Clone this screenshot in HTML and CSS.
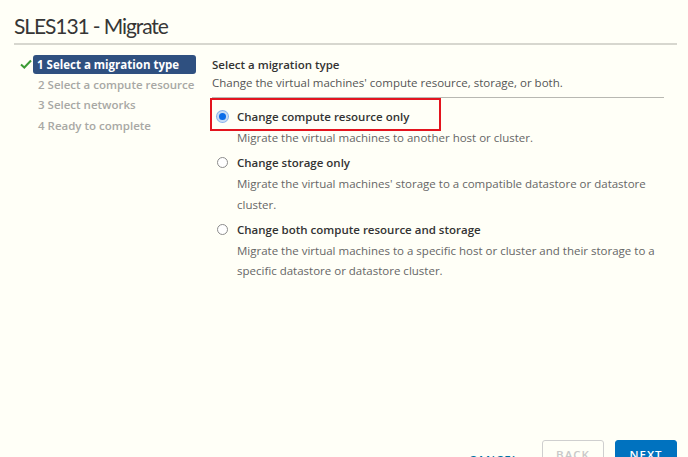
FILE: index.html
```html
<!DOCTYPE html>
<html>
<head>
<meta charset="utf-8">
<link rel="stylesheet" href="styles.css">
</head>
<body>
<div class="dialog">
  <h1 class="title">SLES131 - Migrate</h1>
  <div class="body">
    <nav class="steps">
      <div class="step current">
        <svg class="check" viewBox="0 0 12 10" width="12" height="10"><path d="M1 5.5 L4.3 8.5 L11 1.5" fill="none" stroke="#3c9c35" stroke-width="2"/></svg>
        <span class="pill">1 Select a migration type</span>
      </div>
      <div class="step">2 Select a compute resource</div>
      <div class="step">3 Select networks</div>
      <div class="step">4 Ready to complete</div>
    </nav>
    <main class="content">
      <div class="head">
        <div class="h-title">Select a migration type</div>
        <div class="h-sub">Change the virtual machines' compute resource, storage, or both.</div>
      </div>
      <div class="options">
        <div class="option highlighted">
          <label class="opt-label"><span class="radio checked"></span>Change compute resource only</label>
        </div>
        <div class="desc">Migrate the virtual machines to another host or cluster.</div>
        <div class="option">
          <label class="opt-label"><span class="radio"></span>Change storage only</label>
        </div>
        <div class="desc">Migrate the virtual machines' storage to a compatible datastore or datastore cluster.</div>
        <div class="option">
          <label class="opt-label"><span class="radio"></span>Change both compute resource and storage</label>
        </div>
        <div class="desc">Migrate the virtual machines to a specific host or cluster and their storage to a specific datastore or datastore cluster.</div>
      </div>
    </main>
  </div>
  <footer class="footer">
    <button class="btn link">CANCEL</button>
    <button class="btn outline">BACK</button>
    <button class="btn primary">NEXT</button>
  </footer>
</div>
</body>
</html>
```
FILE: styles.css
```css
html, body {
  margin: 0;
  padding: 0;
  background: #fffff7;
  height: 457px;
  overflow: hidden;
}
body {
  font-family: "Open Sans", "Lato", sans-serif;
  color: #565656;
}
.dialog {
  padding: 0 11px 0 14px;
  height: 457px;
  display: flex;
  flex-direction: column;
}
.title {
  margin: 0;
  padding-top: 13px;
  height: 30px;
  font-family: "Lato", sans-serif;
  font-weight: 400;
  font-size: 21px;
  line-height: 26px;
  color: #363636;
  letter-spacing: -1.1px;
  border-bottom: 2px solid #d7d7cf;
}
.body {
  display: flex;
  flex: 1;
  padding-top: 9px;
}
.steps {
  width: 182px;
  padding-left: 4px;
  display: flex;
  flex-direction: column;
}
.step {
  font-size: 11.5px;
  font-weight: 600;
  color: #a8a8a4;
  height: 20.5px;
  line-height: 20px;
  padding-left: 20px;
}
.step.current {
  padding-left: 2px;
  display: flex;
  align-items: center;
  gap: 3px;
}
.check { flex: none; }
.pill {
  background: #2f5080;
  color: #fff;
  font-weight: 700;
  border-radius: 3px;
  height: 19px;
  line-height: 19px;
  padding: 0 4px;
  width: 155px;
  margin-left: -2px;
}
.content {
  flex: 1;
  padding-left: 12px;
  padding-right: 13px;
}
.head {
  border-bottom: 1px solid #b8b8b2;
  padding-top: 2px;
  padding-bottom: 5px;
}
.h-title {
  font-size: 11.5px;
  font-weight: 600;
  color: #333;
  line-height: 18px;
}
.h-sub {
  font-size: 11.5px;
  line-height: 18px;
  color: #555;
}
.options { padding-top: 7px; }
.option {
  position: relative;
  display: flex;
  align-items: center;
  height: 23px;
  padding-left: 5px;
}
.option.highlighted::after {
  content: "";
  position: absolute;
  left: -2px;
  top: -7px;
  bottom: -3px;
  width: 231px;
  border: 2px solid #e3141e;
  box-sizing: border-box;
  pointer-events: none;
}
.opt-label {
  display: flex;
  align-items: center;
  font-size: 11.5px;
  font-weight: 600;
  color: #333;
  white-space: nowrap;
}
.radio {
  width: 11px;
  height: 11px;
  border-radius: 50%;
  border: 1px solid #8c8c8c;
  background: #fff;
  margin-right: 9px;
  box-sizing: border-box;
}
.radio.checked {
  border: 2px solid #c8dcf5;
  background: #0a6be8;
  box-shadow: 0 0 0 1px #8ab2ea;
}
.desc {
  font-size: 11.5px;
  line-height: 20.5px;
  color: #666;
  padding-left: 25px;
  padding-right: 6px;
  margin-bottom: 2.5px;
}
.footer {
  display: flex;
  justify-content: flex-end;
  align-items: flex-start;
  gap: 11px;
  height: 17px;
  padding-right: 0;
}
.btn {
  font-family: "Open Sans", sans-serif;
  font-size: 11.5px;
  font-weight: 600;
  letter-spacing: 1px;
  height: 30px;
  border-radius: 3px;
  padding: 0;
  width: 62px;
  line-height: 28px;
  text-align: center;
}
.btn.link {
  background: none;
  border: none;
  color: #0072a3;
  margin-top: 5px;
  margin-right: 9px;
  width: 56px;
}
.btn.outline {
  background: transparent;
  border: 1px solid #cfcfcf;
  color: #c8c8c8;
}
.btn.primary {
  background: #0072bf;
  border: 1px solid #0072bf;
  color: #fff;
}
```
